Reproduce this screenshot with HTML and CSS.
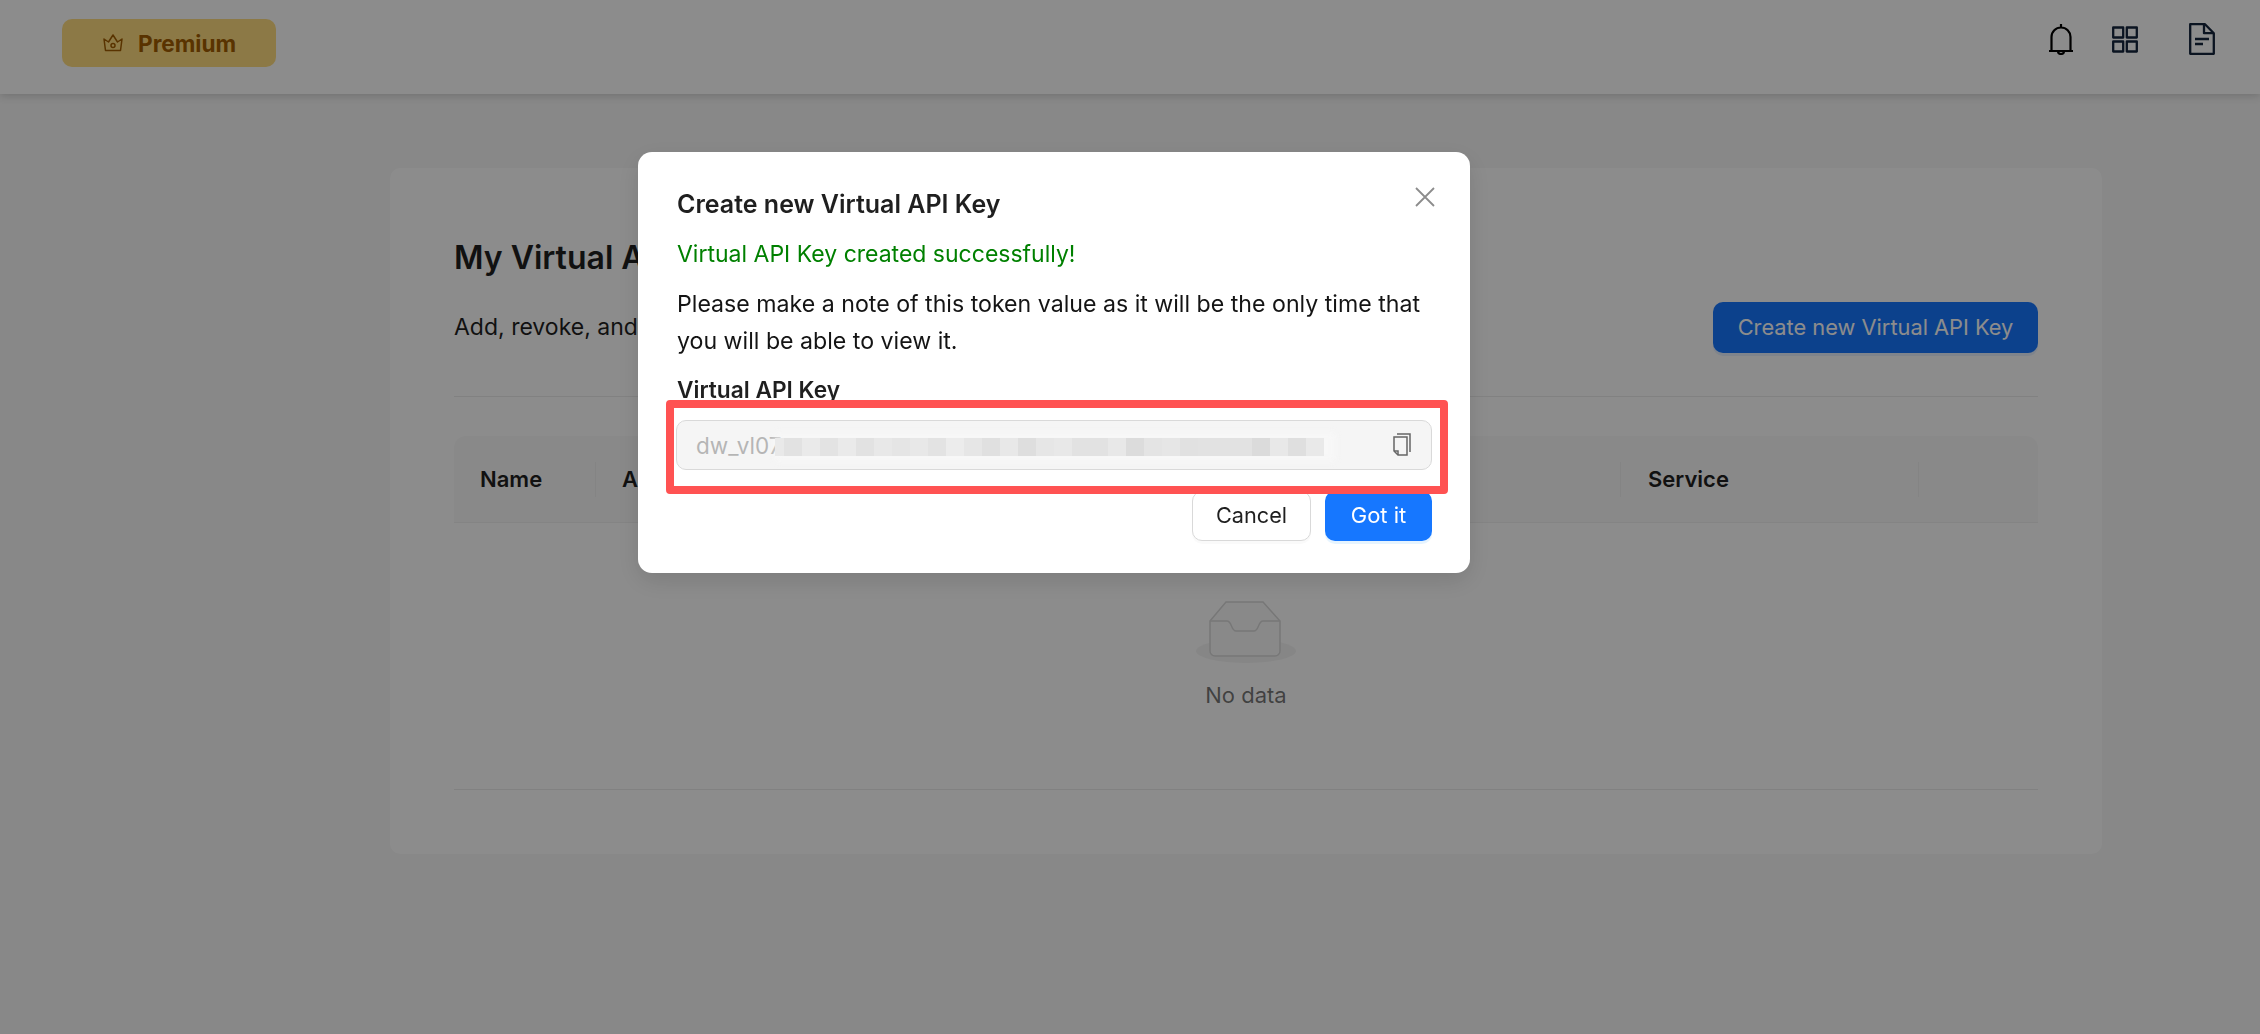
FILE: index.html
```html
<!DOCTYPE html>
<html lang="en">
<head>
<meta charset="utf-8">
<title>My Virtual API Keys</title>
<link rel="stylesheet" href="styles.css">
</head>
<body>
<header class="topbar">
  <button class="premium">
    <svg class="crown" viewBox="0 0 20 18" fill="none" stroke="#a35e00" stroke-width="1.500" stroke-linejoin="round"><path d="M2.500 16.500 1 5l4.500 3L10 1l4.500 7L19 5l-1.500 11.500Z"/><circle cx="10" cy="11.500" r="2"/></svg>
    <span>Premium</span>
  </button>
  <div class="top-icons">
    <svg class="ic-bell" viewBox="0 0 24 31" fill="none" stroke="#000" stroke-width="2.200"><path d="M12 0v3M2.500 27V13a9.500 9.500 0 0 1 19 0v14M0 27h24M9 27a3 3 0 0 0 6 0"/></svg>
    <svg class="ic-grid" viewBox="0 0 26 27" fill="none" stroke="#14253d" stroke-width="2.300" stroke-linejoin="round"><rect x="1.200" y="1.500" width="10" height="10"/><rect x="14.800" y="1.500" width="10" height="10"/><rect x="1.200" y="15.500" width="10" height="10"/><rect x="14.800" y="15.500" width="10" height="10"/></svg>
    <svg class="ic-doc" viewBox="0 0 26 32" fill="none" stroke="#14253d" stroke-width="2.300" stroke-linejoin="round"><path d="M1.200 1.200h14.800l8.800 9v20.600H1.200Z"/><path d="M15 1.200v9h9.800"/><path d="M6 16h14M6 21h8"/></svg>
  </div>
</header>
<main class="page">
  <section class="card">
    <h1 class="heading">My Virtual A</h1>
    <div class="intro">
      <p class="subtitle">Add, revoke, and</p>
      <button class="create">Create new Virtual API Key</button>
    </div>
    <div class="table">
      <div class="thead">
        <div class="th th-name">Name</div>
        <div class="th th-key">A</div>
        <div class="th th-service">Service</div>
        <div class="th th-last"></div>
      </div>
      <div class="empty">
        <svg class="inbox" viewBox="0 0 100 62" fill="none">
          <ellipse cx="50" cy="50" rx="50" ry="12" fill="#f5f5f5"/>
          <path d="M14 20 30 1h37l17 19v30a5 5 0 0 1-5 5H19a5 5 0 0 1-5-5Z" fill="#fafafa" stroke="#d9d9d9" stroke-width="1.500"/>
          <path d="M14 20h17c5 0 4 10 9 10h18c5 0 4-10 9-10h17" stroke="#d9d9d9" stroke-width="1.500"/>
        </svg>
        <div class="empty-text">No data</div>
      </div>
    </div>
  </section>
</main>
<div class="overlay">
  <div class="modal">
    <svg class="close" viewBox="0 0 20 20" fill="none" stroke="#8c8c8c" stroke-width="1.800"><path d="M1 1l18 18M19 1 1 19"/></svg>
    <h2 class="modal-title">Create new Virtual API Key</h2>
    <p class="success">Virtual API Key created successfully!</p>
    <p class="note">Please make a note of this token value as it will be the only time that you will be able to view it.</p>
    <div class="label">Virtual API Key</div>
    <div class="field">
      <div class="input">
        <span class="token">dw_vl07</span>
        <span class="smudge"></span>
        <svg class="copy" viewBox="0 0 18 23" fill="none" stroke="#666" stroke-width="1.500"><path d="M4 1h13v18"/><path d="M1 4h13v18H5l-4-4Z"/><path d="M1 18h4v4"/></svg>
      </div>
      <div class="callout"></div>
    </div>
    <div class="actions">
      <button class="btn btn-cancel">Cancel</button>
      <button class="btn btn-ok">Got it</button>
    </div>
  </div>
</div>
</body>
</html>
```
FILE: styles.css
```css
* { box-sizing: border-box; }
html, body { margin: 0; height: 100%; }
body {
  background: #f7f7f7;
  font-family: Inter, "Liberation Sans", sans-serif;
  color: #1f1f1f;
  overflow: hidden;
}
button { font-family: inherit; cursor: pointer; }
h1, h2, p { margin: 0; }

.topbar {
  height: 94px;
  background: #fff;
  box-shadow: 0 2px 8px rgba(0,0,0,.16);
  display: flex;
  align-items: flex-start;
  justify-content: space-between;
  padding: 19px 45px 0 62px;
  position: relative;
}
.premium {
  width: 214px;
  height: 48px;
  border: 0;
  border-radius: 10px;
  background: #ffdd80;
  color: #a35e00;
  font-size: 22.600px;
  font-weight: 700;
  display: flex;
  align-items: center;
  gap: 15px;
  padding: 0 0 0 41px;
}
.crown { width: 20px; height: 18px; }
.top-icons { display: flex; align-items: center; margin-top: 4px; }
.ic-bell { width: 24px; height: 31px; margin-right: 39px; }
.ic-grid { width: 26px; height: 27px; margin-right: 51px; }
.ic-doc { width: 26px; height: 32px; }

.page { padding: 74px 158px 0 390px; }
.card {
  background: #fff;
  border-radius: 10px;
  padding: 70px 64px 64.500px;
}
.heading {
  font-size: 32px;
  line-height: 40px;
  font-weight: 600;
  margin-bottom: 24px;
}
.intro {
  display: flex;
  align-items: center;
  justify-content: space-between;
  padding-bottom: 43px;
  border-bottom: 1px solid #ececec;
  margin-bottom: 39px;
}
.subtitle { font-size: 23px; line-height: 32px; padding-bottom: 2px; }
.create {
  width: 325px;
  height: 51px;
  border: 0;
  border-radius: 10px;
  background: #1677ff;
  color: #fff;
  font-size: 21.800px;
  padding: 0 0 2px;
  box-shadow: 0 3px 0 rgba(22,119,255,.1);
}
.table { border-bottom: 1px solid #ececec; }
.thead {
  height: 87px;
  background: #fafafa;
  border-bottom: 1px solid #f0f0f0;
  border-radius: 12px 12px 0 0;
  display: grid;
  grid-template-columns: 142px 1025px 298px 119px;
  align-items: center;
}
.th {
  font-size: 22px;
  font-weight: 600;
  padding-left: 26px;
  height: 35px;
  line-height: 35px;
  border-right: 1px solid #f0f0f0;
}
.th-last { border-right: 0; }
.th-service { padding-left: 27px; }
.empty {
  height: 265.500px;
  padding-top: 78px;
  display: flex;
  flex-direction: column;
  align-items: center;
}
.inbox { width: 100px; height: 62px; }
.empty-text {
  margin-top: 16px;
  font-size: 22px;
  line-height: 32px;
  color: rgba(0,0,0,.55);
}

.overlay {
  position: fixed;
  inset: 0;
  background: rgba(0,0,0,.45);
  padding: 152px 0 0 638px;
}
.modal {
  position: relative;
  width: 832px;
  background: #fff;
  border-radius: 14px;
  padding: 34px 38px 32px 39px;
  box-shadow: 0 8px 24px rgba(0,0,0,.12);
}
.close { position: absolute; top: 35px; right: 35px; width: 20px; height: 20px; }
.modal-title { font-size: 25px; line-height: 36px; font-weight: 600; margin-bottom: 14px; }
.success { font-size: 23px; line-height: 36px; color: #008000; margin-bottom: 13.500px; }
.note { font-size: 23.150px; line-height: 37.500px; color: #141414; margin-bottom: 14.500px; }
.label { font-size: 22.700px; line-height: 30px; font-weight: 600; margin-bottom: 15px; }
.field { position: relative; margin-left: -1px; }
.input {
  position: relative;
  height: 49.500px;
  background: #f5f5f5;
  border: 1.500px solid #d9d9d9;
  border-radius: 10px;
  display: flex;
  align-items: center;
  justify-content: space-between;
  padding: 0 20px 0 19px;
}
.token { font-size: 22.500px; color: #b5b5b5; padding-top: 1px; }
.smudge {
  position: absolute;
  left: 97.500px;
  top: 16.500px;
  width: 549px;
  height: 18px;
  box-shadow: 6px 0 7px 6px rgba(250,250,250,.55);
  background-image: linear-gradient(90deg,
    #e9e9e9 0 9px, #e2e2e2 9px 27px, #eaeaea 27px 45px, #e3e3e3 45px 63px,
    #eaeaea 63px 81px, #e2e2e2 81px 99px, #e8e8e8 99px 117px, #e5e5e5 117px 135px,
    #e8e8e8 135px 153px, #e3e3e3 153px 171px, #ececec 171px 189px, #e6e6e6 189px 207px,
    #e0e0e0 207px 225px, #e8e8e8 225px 243px, #dedede 243px 261px, #e6e6e6 261px 279px,
    #e8e8e8 279px 297px, #e2e2e2 297px 333px, #e8e8e8 333px 351px, #dcdcdc 351px 369px,
    #e4e4e4 369px 387px, #e6e6e6 387px 405px, #e1e1e1 405px 423px, #e2e2e2 423px 477px,
    #dbdbdb 477px 495px, #e8e8e8 495px 513px, #dfdfdf 513px 531px, #e9e9e9 531px 549px);
}
.copy { width: 18px; height: 23px; }
.callout {
  position: absolute;
  inset: -20px -16px -24px -10px;
  border: 8px solid #ff5252;
  border-radius: 4px;
}
.actions { display: flex; justify-content: flex-end; gap: 14px; margin-top: 21.500px; }
.btn { height: 50px; border-radius: 10px; font-size: 22px; padding: 0 0 2px; }
.btn-cancel {
  width: 119px;
  background: #fff;
  color: #1f1f1f;
  font-size: 21.700px;
  border: 1.500px solid #d9d9d9;
  box-shadow: 0 3px 0 rgba(0,0,0,.02);
}
.btn-ok {
  width: 107px;
  background: #1677ff;
  color: #fff;
  border: 0;
  box-shadow: 0 3px 0 rgba(5,145,255,.1);
}
```
